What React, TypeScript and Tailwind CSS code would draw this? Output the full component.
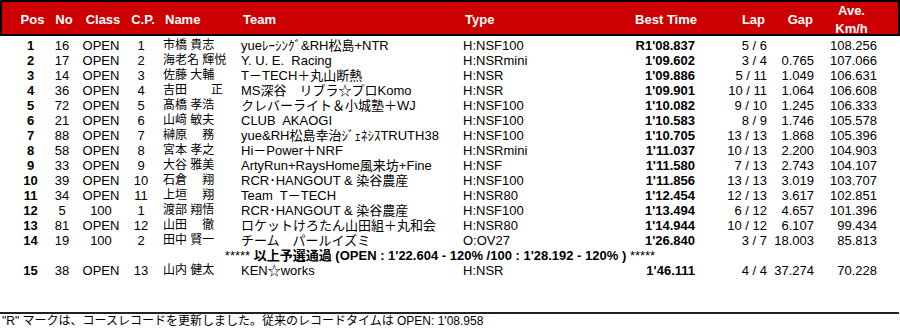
import React from "react";

type Row = {
  pos: string;
  no: string;
  cls: string;
  cp: string;
  name: string;
  team: string;
  type: string;
  best: string;
  lap: string;
  gap: string;
  ave: string;
};

const rows: Row[] = [
  { pos: "1", no: "16", cls: "OPEN", cp: "1", name: "市橋 貴志", team: "yueﾚｰｼﾝｸﾞ&RH松島+NTR", type: "H:NSF100", best: "R1'08.837", lap: "5 / 6", gap: "", ave: "108.256" },
  { pos: "2", no: "17", cls: "OPEN", cp: "2", name: "海老名 輝悦", team: "Y. U. E.  Racing", type: "H:NSRmini", best: "1'09.602", lap: "3 / 4", gap: "0.765", ave: "107.066" },
  { pos: "3", no: "14", cls: "OPEN", cp: "3", name: "佐藤 大輔", team: "T－TECH＋丸山断熱", type: "H:NSR", best: "1'09.886", lap: "5 / 11", gap: "1.049", ave: "106.631" },
  { pos: "4", no: "36", cls: "OPEN", cp: "4", name: "吉田　　正", team: "MS深谷　リブラ☆プロKomo", type: "H:NSR", best: "1'09.901", lap: "10 / 11", gap: "1.064", ave: "106.608" },
  { pos: "5", no: "72", cls: "OPEN", cp: "5", name: "髙橋 孝浩", team: "クレバーライト＆小城塾＋WJ", type: "H:NSF100", best: "1'10.082", lap: "9 / 10", gap: "1.245", ave: "106.333" },
  { pos: "6", no: "21", cls: "OPEN", cp: "6", name: "山﨑 敏夫", team: "CLUB  AKAOGI", type: "H:NSF100", best: "1'10.583", lap: "8 / 9", gap: "1.746", ave: "105.578" },
  { pos: "7", no: "88", cls: "OPEN", cp: "7", name: "榊原　 務", team: "yue&RH松島幸治ｼﾞｪﾈｼｽTRUTH38", type: "H:NSF100", best: "1'10.705", lap: "13 / 13", gap: "1.868", ave: "105.396" },
  { pos: "8", no: "58", cls: "OPEN", cp: "8", name: "宮本 孝之", team: "Hi－Power＋NRF", type: "H:NSRmini", best: "1'11.037", lap: "10 / 13", gap: "2.200", ave: "104.903" },
  { pos: "9", no: "33", cls: "OPEN", cp: "9", name: "大谷 雅美", team: "ArtyRun+RaysHome風来坊+Fine", type: "H:NSF", best: "1'11.580", lap: "7 / 13", gap: "2.743", ave: "104.107" },
  { pos: "10", no: "39", cls: "OPEN", cp: "10", name: "石倉　 翔", team: "RCR･HANGOUT & 染谷農産", type: "H:NSF100", best: "1'11.856", lap: "13 / 13", gap: "3.019", ave: "103.707" },
  { pos: "11", no: "34", cls: "OPEN", cp: "11", name: "上垣　 翔", team: "Team  T－TECH", type: "H:NSR80", best: "1'12.454", lap: "12 / 13", gap: "3.617", ave: "102.851" },
  { pos: "12", no: "5", cls: "100", cp: "1", name: "渡部 翔悟", team: "RCR･HANGOUT & 染谷農産", type: "H:NSF100", best: "1'13.494", lap: "6 / 12", gap: "4.657", ave: "101.396" },
  { pos: "13", no: "81", cls: "OPEN", cp: "12", name: "山田　 徹", team: "ロケットけろたん山田組＋丸和会", type: "H:NSR80", best: "1'14.944", lap: "10 / 12", gap: "6.107", ave: "99.434" },
  { pos: "14", no: "19", cls: "100", cp: "2", name: "田中 賢一", team: "チーム　パールイズミ", type: "O:OV27", best: "1'26.840", lap: "3 / 7", gap: "18.003", ave: "85.813" },
];

const last: Row = { pos: "15", no: "38", cls: "OPEN", cp: "13", name: "山内 健太", team: "KEN☆works", type: "H:NSR", best: "1'46.111", lap: "4 / 4", gap: "37.274", ave: "70.228" };

const cols = "grid grid-cols-[41px_22px_56px_24px_88px_221px_168px_65px_72px_47px_63px] pl-[10px]";

const ResultRow: React.FC<{ r: Row }> = ({ r }) => (
  <div className={`${cols} h-[15px] leading-[15px] whitespace-pre`}>
    <div className="text-center font-bold">{r.pos}</div>
    <div className="text-center">{r.no}</div>
    <div className="text-center">{r.cls}</div>
    <div className="text-center">{r.cp}</div>
    <div className="pl-[10px] text-[12px]">{r.name}</div>
    <div className="overflow-hidden">{r.team}</div>
    <div className="pl-[1px]">{r.type}</div>
    <div className="text-right font-bold">{r.best}</div>
    <div className="text-right">{r.lap}</div>
    <div className="text-right">{r.gap}</div>
    <div className="text-right">{r.ave}</div>
  </div>
);

export default function App() {
  return (
    <div
      className="w-[900px] h-[328px] bg-white text-black text-[13px] overflow-hidden"
      style={{ fontFamily: '"Liberation Sans", "Noto Sans CJK JP", sans-serif' }}
    >
      <div className={`${cols} h-[36px] bg-[#cc0000] border-2 border-black text-white font-bold items-center`}>
        <div className="text-center">Pos</div>
        <div className="text-center">No</div>
        <div className="text-center">Class</div>
        <div className="text-center">C.P.</div>
        <div className="pl-[10px]">Name</div>
        <div>Team</div>
        <div className="pl-[1px]">Type</div>
        <div className="text-right">Best Time</div>
        <div className="text-right pr-[4px]">Lap</div>
        <div className="text-right pr-[3px]">Gap</div>
        <div className="text-center leading-[18px] pl-[8px]">
          Ave.
          <br />
          Km/h
        </div>
      </div>

      <div className="mt-[2px]">
        {rows.map((r) => (
          <ResultRow key={r.pos} r={r} />
        ))}
        <div className="h-[15px] leading-[15px] flex justify-center pr-[20px] whitespace-pre">
          <span>*****</span>
          <span className="font-bold"> 以上予選通過 (OPEN : 1'22.604 - 120% /100 : 1'28.192 - 120% ) </span>
          <span>*****</span>
        </div>
        <ResultRow r={last} />
      </div>

      <div className="mt-[34px] border-t-2 border-[#222] w-[899px]" />
      <div className="pl-[2px] text-[12px] leading-[14px] whitespace-pre">
        "R" マークは、コースレコードを更新しました。従来のレコードタイムは OPEN: 1'08.958
      </div>
    </div>
  );
}
